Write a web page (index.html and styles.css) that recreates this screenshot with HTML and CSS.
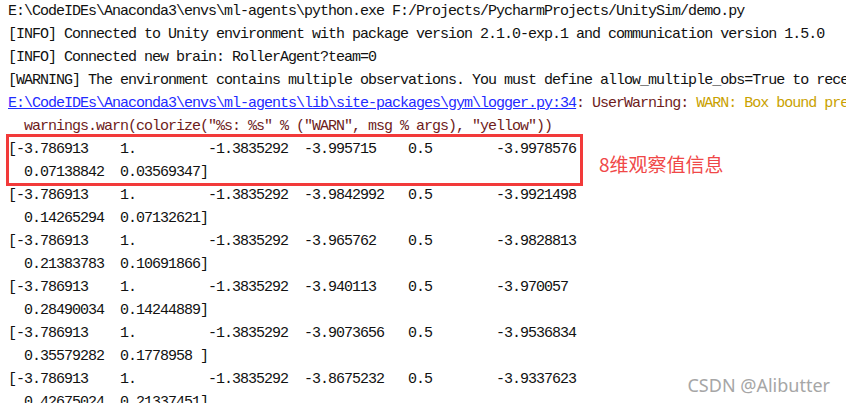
FILE: index.html
```html
<!DOCTYPE html>
<html>
<head>
  <title>Run console</title>
  <link rel="stylesheet" href="styles.css">
</head>
<body>
  <div class="console">
    <div class="line">E:\CodeIDEs\Anaconda3\envs\ml-agents\python.exe F:/Projects/PycharmProjects/UnitySim/demo.py</div>
    <div class="line">[INFO] Connected to Unity environment with package version 2.1.0-exp.1 and communication version 1.5.0</div>
    <div class="line">[INFO] Connected new brain: RollerAgent?team=0</div>
    <div class="line">[WARNING] The environment contains multiple observations. You must define allow_multiple_obs=True to receive them all.</div>
    <div class="line"><a class="link" href="#">E:\CodeIDEs\Anaconda3\envs\ml-agents\lib\site-packages\gym\logger.py:34</a><span class="warn-name">: UserWarning: </span><span class="warn-msg">WARN: Box bound precision lowered by casting to float32</span></div>
    <div class="line warn-name">  warnings.warn(colorize("%s: %s" % ("WARN", msg % args), "yellow"))</div>
    <!-- First observation, marked in the screenshot -->
    <div class="marked">
      <div class="line">[-3.786913    1.         -1.3835292  -3.995715    0.5        -3.9978576</div>
      <div class="line">  0.07138842  0.03569347]</div>
      <span class="note">8维观察值信息</span>
    </div>
    <div class="line">[-3.786913    1.         -1.3835292  -3.9842992   0.5        -3.9921498</div>
    <div class="line">  0.14265294  0.07132621]</div>
    <div class="line">[-3.786913    1.         -1.3835292  -3.965762    0.5        -3.9828813</div>
    <div class="line">  0.21383783  0.10691866]</div>
    <div class="line">[-3.786913    1.         -1.3835292  -3.940113    0.5        -3.970057</div>
    <div class="line">  0.28490034  0.14244889]</div>
    <div class="line">[-3.786913    1.         -1.3835292  -3.9073656   0.5        -3.9536834</div>
    <div class="line">  0.35579282  0.1778958 ]</div>
    <div class="line">[-3.786913    1.         -1.3835292  -3.8675232   0.5        -3.9337623</div>
    <div class="line">  0.42675024  0.21337451]</div>
  </div>
  <div class="watermark">CSDN @Alibutter</div>
</body>
</html>
```

FILE: styles.css
```css
/*Page*/
body {
  margin: 0;
  background-color: #ffffff;
  overflow: hidden;
}
/*Console output*/
.console {
  padding: 0 0 0 8px;
  font-family: "Liberation Mono", monospace;
  font-size: 15px;
  letter-spacing: -1px;
  color: #111111;
}
.line {
  height: 23px;
  line-height: 23px;
  white-space: pre;
}
/*Link to the source file*/
.link {
  color: #1f2bff;
  text-decoration: underline;
}
.warn-name {
  color: #6e1c1c;
}
.warn-msg {
  color: #c9a100;
}
/*Red annotation box*/
.marked {
  position: relative;
  width: 568px;
}
.marked::after {
  content: "";
  position: absolute;
  top: -4px;
  bottom: -2px;
  left: -2px;
  right: -7px;
  border: 3px solid #f23a3a;
}
.note {
  position: absolute;
  top: 12px;
  left: 591px;
  font-family: "Noto Sans CJK SC", sans-serif;
  font-size: 19px;
  letter-spacing: 0;
  color: #f04848;
  white-space: nowrap;
}
/*Watermark*/
.watermark {
  position: absolute;
  right: 16px;
  bottom: 6px;
  font-family: "Noto Sans", sans-serif;
  font-size: 18px;
  color: #a6a6a6;
}
```
